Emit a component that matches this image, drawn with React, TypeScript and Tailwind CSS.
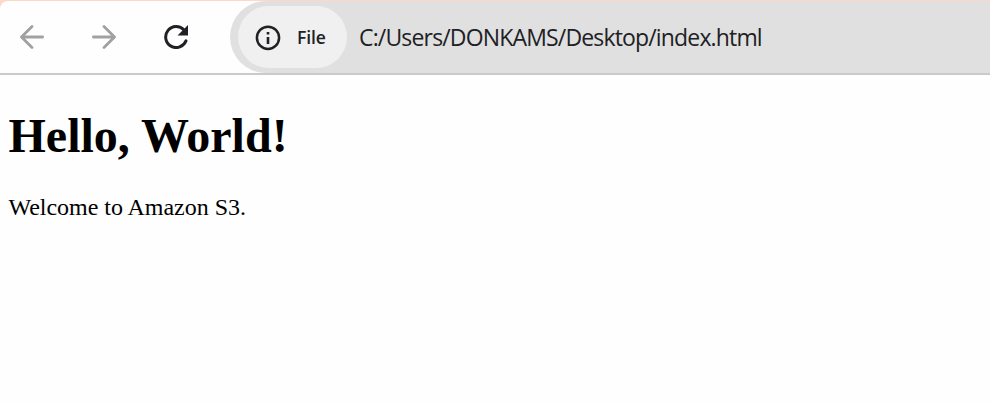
function BackArrow() {
  return (
    <svg className="size-6" viewBox="0 0 24 24" fill="none" stroke="#a1a1a1" strokeWidth="2.8" strokeLinecap="round" strokeLinejoin="round">
      <path d="M22.6 12H1.8M12 1.5L1.5 12L12 22.5" />
    </svg>
  );
}

function ForwardArrow() {
  return (
    <svg className="size-6" viewBox="0 0 24 24" fill="none" stroke="#a1a1a1" strokeWidth="2.8" strokeLinecap="round" strokeLinejoin="round">
      <path d="M1.4 12H22.2M12 1.5L22.5 12L12 22.5" />
    </svg>
  );
}

function ReloadIcon() {
  return (
    <svg className="size-6" viewBox="0 0 24 24" fill="none">
      <path d="M20 5A10.5 10.5 0 1 0 22 15.8" stroke="#202124" strokeWidth="3" strokeLinecap="round" />
      <path d="M24 0V10.5H13.5Z" fill="#202124" />
    </svg>
  );
}

function InfoIcon() {
  return (
    <svg className="mt-0.5 size-[26px]" viewBox="0 0 26 26" fill="none">
      <circle cx="13" cy="12.8" r="11.1" stroke="#202124" strokeWidth="2.5" />
      <path d="M11.7 11.9h2.6v7.2h-2.6zM11.7 7h2.6v2.5h-2.6z" fill="#202124" />
    </svg>
  );
}

export default function App() {
  return (
    <div className="flex h-[403px] w-[990px] flex-col overflow-hidden bg-[#fefefe]">
      <header className="h-[75px] shrink-0 border-b-2 border-[#cacaca] bg-[#ffd7c8] pt-px">
        <div className="flex h-[72px] rounded-tl-[8px] bg-[#fefefe]">
          <nav className="flex w-[230px] shrink-0 items-center gap-12 pl-5">
            <button aria-label="Back"><BackArrow /></button>
            <button aria-label="Forward"><ForwardArrow /></button>
            <button aria-label="Reload"><ReloadIcon /></button>
          </nav>
          <div className="flex grow items-center rounded-l-full bg-[#e0e0e0] pl-2">
            <div className="flex h-[62px] w-[109px] shrink-0 items-center rounded-full bg-[#f0f0f0] pl-[17px] font-['Open_Sans','Noto_Sans',sans-serif]">
              <InfoIcon />
              <span className="ml-4 text-[17.5px] leading-6 font-semibold tracking-[-0.15px] text-[#202124]">File</span>
            </div>
            <span className="ml-3 font-['Open_Sans','Noto_Sans',sans-serif] text-[23px] leading-8 tracking-[-0.84px] whitespace-nowrap text-[#202124]">
              C:/Users/DONKAMS/Desktop/index.html
            </span>
          </div>
        </div>
      </header>
      <main className="pt-[33px] pl-[8.5px] font-['Liberation_Serif',serif] text-black">
        <h1 className="text-[48px] leading-[55px] font-bold">Hello, World!</h1>
        <p className="mt-[31px] text-[24px] leading-[27px] tracking-[-0.03px]">Welcome to Amazon S3.</p>
      </main>
    </div>
  );
}
